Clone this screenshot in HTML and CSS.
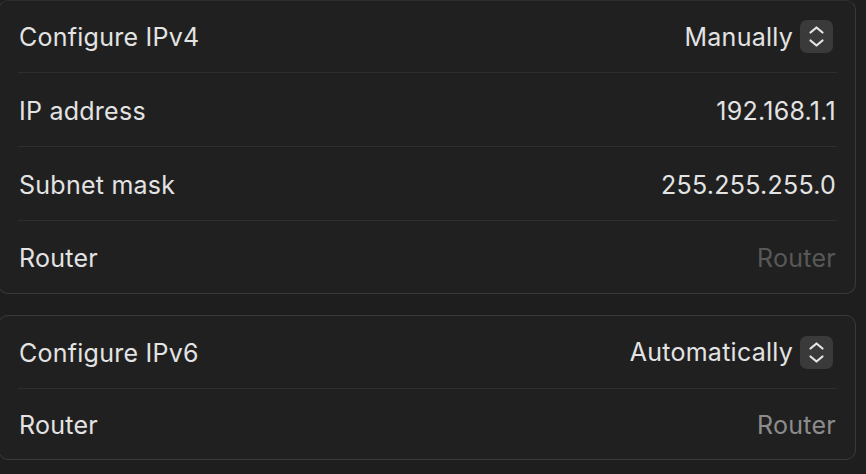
FILE: index.html
```html
<!DOCTYPE html>
<html>
<head>
<meta charset="utf-8">
<link rel="stylesheet" href="styles.css">
</head>
<body>
<div class="page">
  <section class="card">
    <div class="row">
      <div class="row-inner">
        <span class="label">Configure IPv4</span>
        <span class="popup">
          <span class="value">Manually</span>
          <span class="stepper">
            <svg width="33" height="33" viewBox="0 0 33 33"><path d="M10.5 20.5 L16.5 25.5 L22.5 20.5 M10.5 12.5 L16.5 7.5 L22.5 12.5" fill="none" stroke="#e6e6e6" stroke-width="2.2" stroke-linecap="round" stroke-linejoin="round"/></svg>
          </span>
        </span>
      </div>
    </div>
    <div class="row">
      <div class="row-inner">
        <span class="label">IP address</span>
        <span class="value">192.168.1.1</span>
      </div>
    </div>
    <div class="row">
      <div class="row-inner">
        <span class="label">Subnet mask</span>
        <span class="value">255.255.255.0</span>
      </div>
    </div>
    <div class="row">
      <div class="row-inner">
        <span class="label">Router</span>
        <span class="value placeholder-dim">Router</span>
      </div>
    </div>
  </section>
  <section class="card card-small">
    <div class="row">
      <div class="row-inner">
        <span class="label">Configure IPv6</span>
        <span class="popup">
          <span class="value">Automatically</span>
          <span class="stepper">
            <svg width="33" height="33" viewBox="0 0 33 33"><path d="M10.5 20.5 L16.5 25.5 L22.5 20.5 M10.5 12.5 L16.5 7.5 L22.5 12.5" fill="none" stroke="#e6e6e6" stroke-width="2.2" stroke-linecap="round" stroke-linejoin="round"/></svg>
          </span>
        </span>
      </div>
    </div>
    <div class="row">
      <div class="row-inner">
        <span class="label">Router</span>
        <span class="value placeholder">Router</span>
      </div>
    </div>
  </section>
</div>
</body>
</html>
```
FILE: styles.css
```css
html, body {
  margin: 0;
  padding: 0;
  background: #1e1e1e;
}
body {
  font-family: Inter, "Noto Sans", "Liberation Sans", sans-serif;
  color: #e3e3e3;
  font-size: 25px;
  letter-spacing: 0.25px;
  -webkit-font-smoothing: antialiased;
}
.page {
  display: flex;
  flex-direction: column;
  gap: 21px;
  width: 858px;
  margin-left: -2px;
}
.card {
  background: #202020;
  border: 1px solid #3a3a3a;
  border-top-color: #2e2e2e;
  border-radius: 10px;
}
.card-small {
  border-top-color: #3a3a3a;
}
.row {
  padding: 0 18px 0 19px;
}
.row-inner {
  display: flex;
  align-items: center;
  justify-content: space-between;
  box-sizing: border-box;
  height: 74px;
  padding: 2px 1px 0 1px;
  border-bottom: 1px solid #2f2f2f;
}
.row:first-child .row-inner {
  height: 72px;
  padding-top: 1px;
}
.row:last-child .row-inner {
  border-bottom: none;
  height: 72px;
}
.card-small .row:first-child .row-inner {
  height: 73px;
}
.card-small .row:last-child .row-inner {
  height: 70px;
}
.label {
  color: #e3e3e3;
}
.value {
  color: #e3e3e3;
}
.placeholder-dim {
  color: #585858;
}
.placeholder {
  color: #8c8c8c;
}
.popup {
  display: flex;
  align-items: center;
  gap: 7px;
  margin-right: 3px;
  margin-top: -1px;
}
.stepper {
  display: flex;
  width: 33px;
  height: 33px;
  border-radius: 7px;
  background: #3a3a3a;
}
```
